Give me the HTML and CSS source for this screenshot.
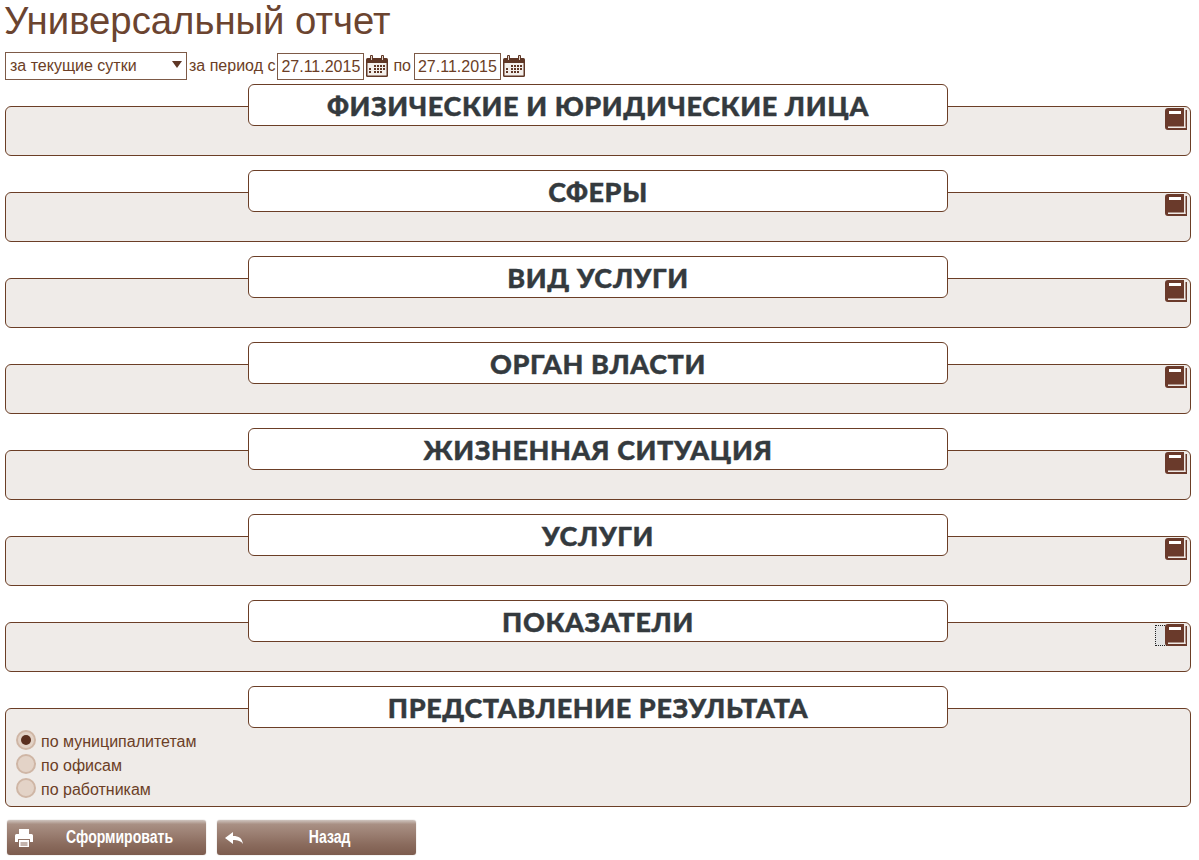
FILE: index.html
```html
<!DOCTYPE html>
<html lang="ru">
<head>
<meta charset="utf-8">
<title>Универсальный отчет</title>
<link rel="stylesheet" href="styles.css">
</head>
<body>
<svg class="defs" width="0" height="0" aria-hidden="true">
  <symbol id="cal" viewBox="0 0 22 22">
    <rect x="0" y="3" width="22" height="19" rx="1.5" fill="#5f3726"/>
    <rect x="1.5" y="8" width="19" height="12.5" fill="#f3efeb"/>
    <rect x="4" y="0" width="3" height="6" rx="1" fill="#5f3726"/>
    <rect x="15" y="0" width="3" height="6" rx="1" fill="#5f3726"/>
    <rect x="5" y="1" width="1" height="4" fill="#e4d8cf"/>
    <rect x="16" y="1" width="1" height="4" fill="#e4d8cf"/>
    <path d="M8 10h2v2H8zM11 10h2v2h-2zM14 10h2v2h-2zM17 10h2v2h-2zM3 13h2v2H3zM8 13h2v2H8zM11 13h2v2h-2zM14 13h2v2h-2zM17 13h2v2h-2zM3 16h2v2H3zM8 16h2v2H8zM11 16h2v2h-2zM14 16h2v2h-2z" fill="#5f3726"/>
  </symbol>
  <symbol id="book" viewBox="0 0 22 22">
    <path d="M0 3a3 3 0 0 1 3-3h16v2h3v20H3a3 3 0 0 1-3-3z" fill="#6a3a2b"/>
    <rect x="19" y="2" width="1.500" height="18" fill="#efe9e5"/>
    <rect x="3" y="18.500" width="17.500" height="1.500" fill="#efe9e5"/>
    <rect x="4" y="3" width="12" height="3" fill="#fff"/>
  </symbol>
</svg>

<h1 class="title">Универсальный отчет</h1>

<div class="filters">
  <div class="select"><span>за текущие сутки</span><i class="caret"></i></div>
  <span class="lbl">за период с</span>
  <div class="date">27.11.2015</div>
  <svg class="cal"><use href="#cal"/></svg>
  <span class="lbl lbl-po">по</span>
  <div class="date">27.11.2015</div>
  <svg class="cal"><use href="#cal"/></svg>
</div>

<div class="panels">
  <section class="panel">
    <h2 class="legend">ФИЗИЧЕСКИЕ И ЮРИДИЧЕСКИЕ ЛИЦА</h2>
    <button class="pick"><svg class="book"><use href="#book"/></svg></button>
  </section>
  <section class="panel">
    <h2 class="legend">СФЕРЫ</h2>
    <button class="pick"><svg class="book"><use href="#book"/></svg></button>
  </section>
  <section class="panel">
    <h2 class="legend">ВИД УСЛУГИ</h2>
    <button class="pick"><svg class="book"><use href="#book"/></svg></button>
  </section>
  <section class="panel">
    <h2 class="legend">ОРГАН ВЛАСТИ</h2>
    <button class="pick"><svg class="book"><use href="#book"/></svg></button>
  </section>
  <section class="panel">
    <h2 class="legend">ЖИЗНЕННАЯ СИТУАЦИЯ</h2>
    <button class="pick"><svg class="book"><use href="#book"/></svg></button>
  </section>
  <section class="panel">
    <h2 class="legend">УСЛУГИ</h2>
    <button class="pick"><svg class="book"><use href="#book"/></svg></button>
  </section>
  <section class="panel">
    <h2 class="legend">ПОКАЗАТЕЛИ</h2>
    <button class="pick focused"><svg class="book"><use href="#book"/></svg></button>
  </section>
  <section class="panel panel-result">
    <h2 class="legend">ПРЕДСТАВЛЕНИЕ РЕЗУЛЬТАТА</h2>
    <div class="radios">
      <div class="radio"><i class="dot on"></i><span>по муниципалитетам</span></div>
      <div class="radio"><i class="dot"></i><span>по офисам</span></div>
      <div class="radio"><i class="dot"></i><span>по работникам</span></div>
    </div>
  </section>
</div>

<div class="actions">
  <div class="btn">
    <svg class="btn-ico" viewBox="0 0 20 20"><path d="M5 1h10v5H5zM1 7.500A1.500 1.500 0 0 1 2.500 6h15A1.500 1.500 0 0 1 19 7.500V14h-3v-3H4v3H1zM5 12h10v7H5z" fill="#fff"/><path d="M6.500 14.500h7v1h-7zM6.500 16.500h7v1h-7z" fill="#8a6a5c"/></svg>
    <span class="btn-text">Сформировать</span>
  </div>
  <div class="btn">
    <svg class="btn-ico" viewBox="0 0 20 20"><path d="M9 4v4c6 0 9 2 10 8-2-3-5-4-10-4v4L1 10z" fill="#fff"/></svg>
    <span class="btn-text">Назад</span>
  </div>
</div>
</body>
</html>
```
FILE: styles.css
```css
* { box-sizing: border-box; }
html, body { margin: 0; padding: 0; }
body {
  width: 1199px;
  height: 860px;
  overflow: hidden;
  background: #fff;
  color: #6b3e26;
  font-family: "Liberation Sans", Arial, sans-serif;
  font-size: 16px;
}
.defs { position: absolute; }
.title {
  margin: 0;
  padding: 1px 0 0 4px;
  height: 52px;
  font-weight: 400;
  font-size: 38.3px;
  line-height: 40px;
  color: #6b4430;
  white-space: nowrap;
}
.filters {
  display: flex;
  align-items: center;
  height: 28px;
  padding-left: 5px;
}
.select {
  width: 182px;
  height: 28px;
  border: 1px solid #7d5a47;
  display: flex;
  align-items: center;
  justify-content: space-between;
  padding: 0 4px 0 3px;
  background: #fff;
}
.select span { margin-left: 1px; }
.caret {
  width: 0;
  height: 0;
  margin: 0 0 4px;
  border-left: 5px solid transparent;
  border-right: 5px solid transparent;
  border-top: 7px solid #5f3726;
}
.lbl { margin-left: 2px; white-space: nowrap; }
.lbl-po { margin-left: 4px; margin-right: 2px; }
.date {
  width: 87px;
  height: 27px;
  margin-left: 2px;
  border: 1px solid #7d5a47;
  line-height: 25px;
  padding-left: 3px;
  white-space: nowrap;
}
.lbl-po + .date { margin-left: 1px; }
.cal { width: 22px; height: 22px; margin-left: 2px; margin-right: 1px; }
.panels { display: flow-root; padding: 0 8px 0 5px; }
.panel {
  position: relative;
  height: 50px;
  margin-top: 36px;
  background: #efebe8;
  border: 1px solid #6b3e26;
  border-radius: 6px;
}
.panel:first-child { margin-top: 26px; }
.panel-result { height: 99px; }
.legend {
  position: absolute;
  left: 242px;
  top: -23px;
  width: 700px;
  height: 42px;
  margin: 0;
  background: #fff;
  border: 1px solid #6b3e26;
  border-radius: 6px;
  color: #343a3e;
  font-family: Lato, "Liberation Sans", sans-serif;
  font-weight: 900;
  font-size: 27px;
  line-height: 41px;
  letter-spacing: 0.6px;
  text-align: center;
  -webkit-text-stroke: 0.4px #343a3e;
}
.pick {
  position: absolute;
  right: 3px;
  top: 1px;
  width: 22px;
  height: 22px;
  padding: 0;
  border: 0;
  background: transparent;
}
.pick.focused::before {
  content: "";
  position: absolute;
  left: -10px;
  top: 1px;
  width: 20px;
  height: 19px;
  border: 1px dotted #222;
  background: #e4e4e4;
}
.book { position: relative; display: block; width: 22px; height: 22px; }
.radios { padding: 19px 0 0 10px; }
.radio { display: flex; align-items: center; height: 24px; font-size: 16px; }
.radio span { margin-left: 5px; padding-top: 3px; }
.dot {
  position: relative;
  width: 20px;
  height: 20px;
  border-radius: 50%;
  background: #e3d3c7;
  border: 2px solid #cfb6a5;
}
.dot.on::after {
  content: "";
  position: absolute;
  left: 3px;
  top: 3px;
  width: 10px;
  height: 10px;
  border-radius: 50%;
  background: #5a2f1e;
}
.actions { display: flex; gap: 11px; padding: 13px 0 0 7px; }
.btn {
  position: relative;
  width: 199px;
  height: 35px;
  display: flex;
  align-items: center;
  justify-content: center;
  padding-left: 27px;
  border-radius: 3px;
  background: linear-gradient(#cfc5bf 0, #a99084 12%, #8a6b5d 70%, #7d5c4e 100%);
  box-shadow: 0 0 1px #9b8a80;
  color: #fff;
}
.btn-text {
  display: inline-block;
  font-weight: 700;
  font-size: 18px;
  transform: scaleX(0.78);
}
.btn-ico { position: absolute; left: 7px; top: 8px; width: 20px; height: 20px; }
```
